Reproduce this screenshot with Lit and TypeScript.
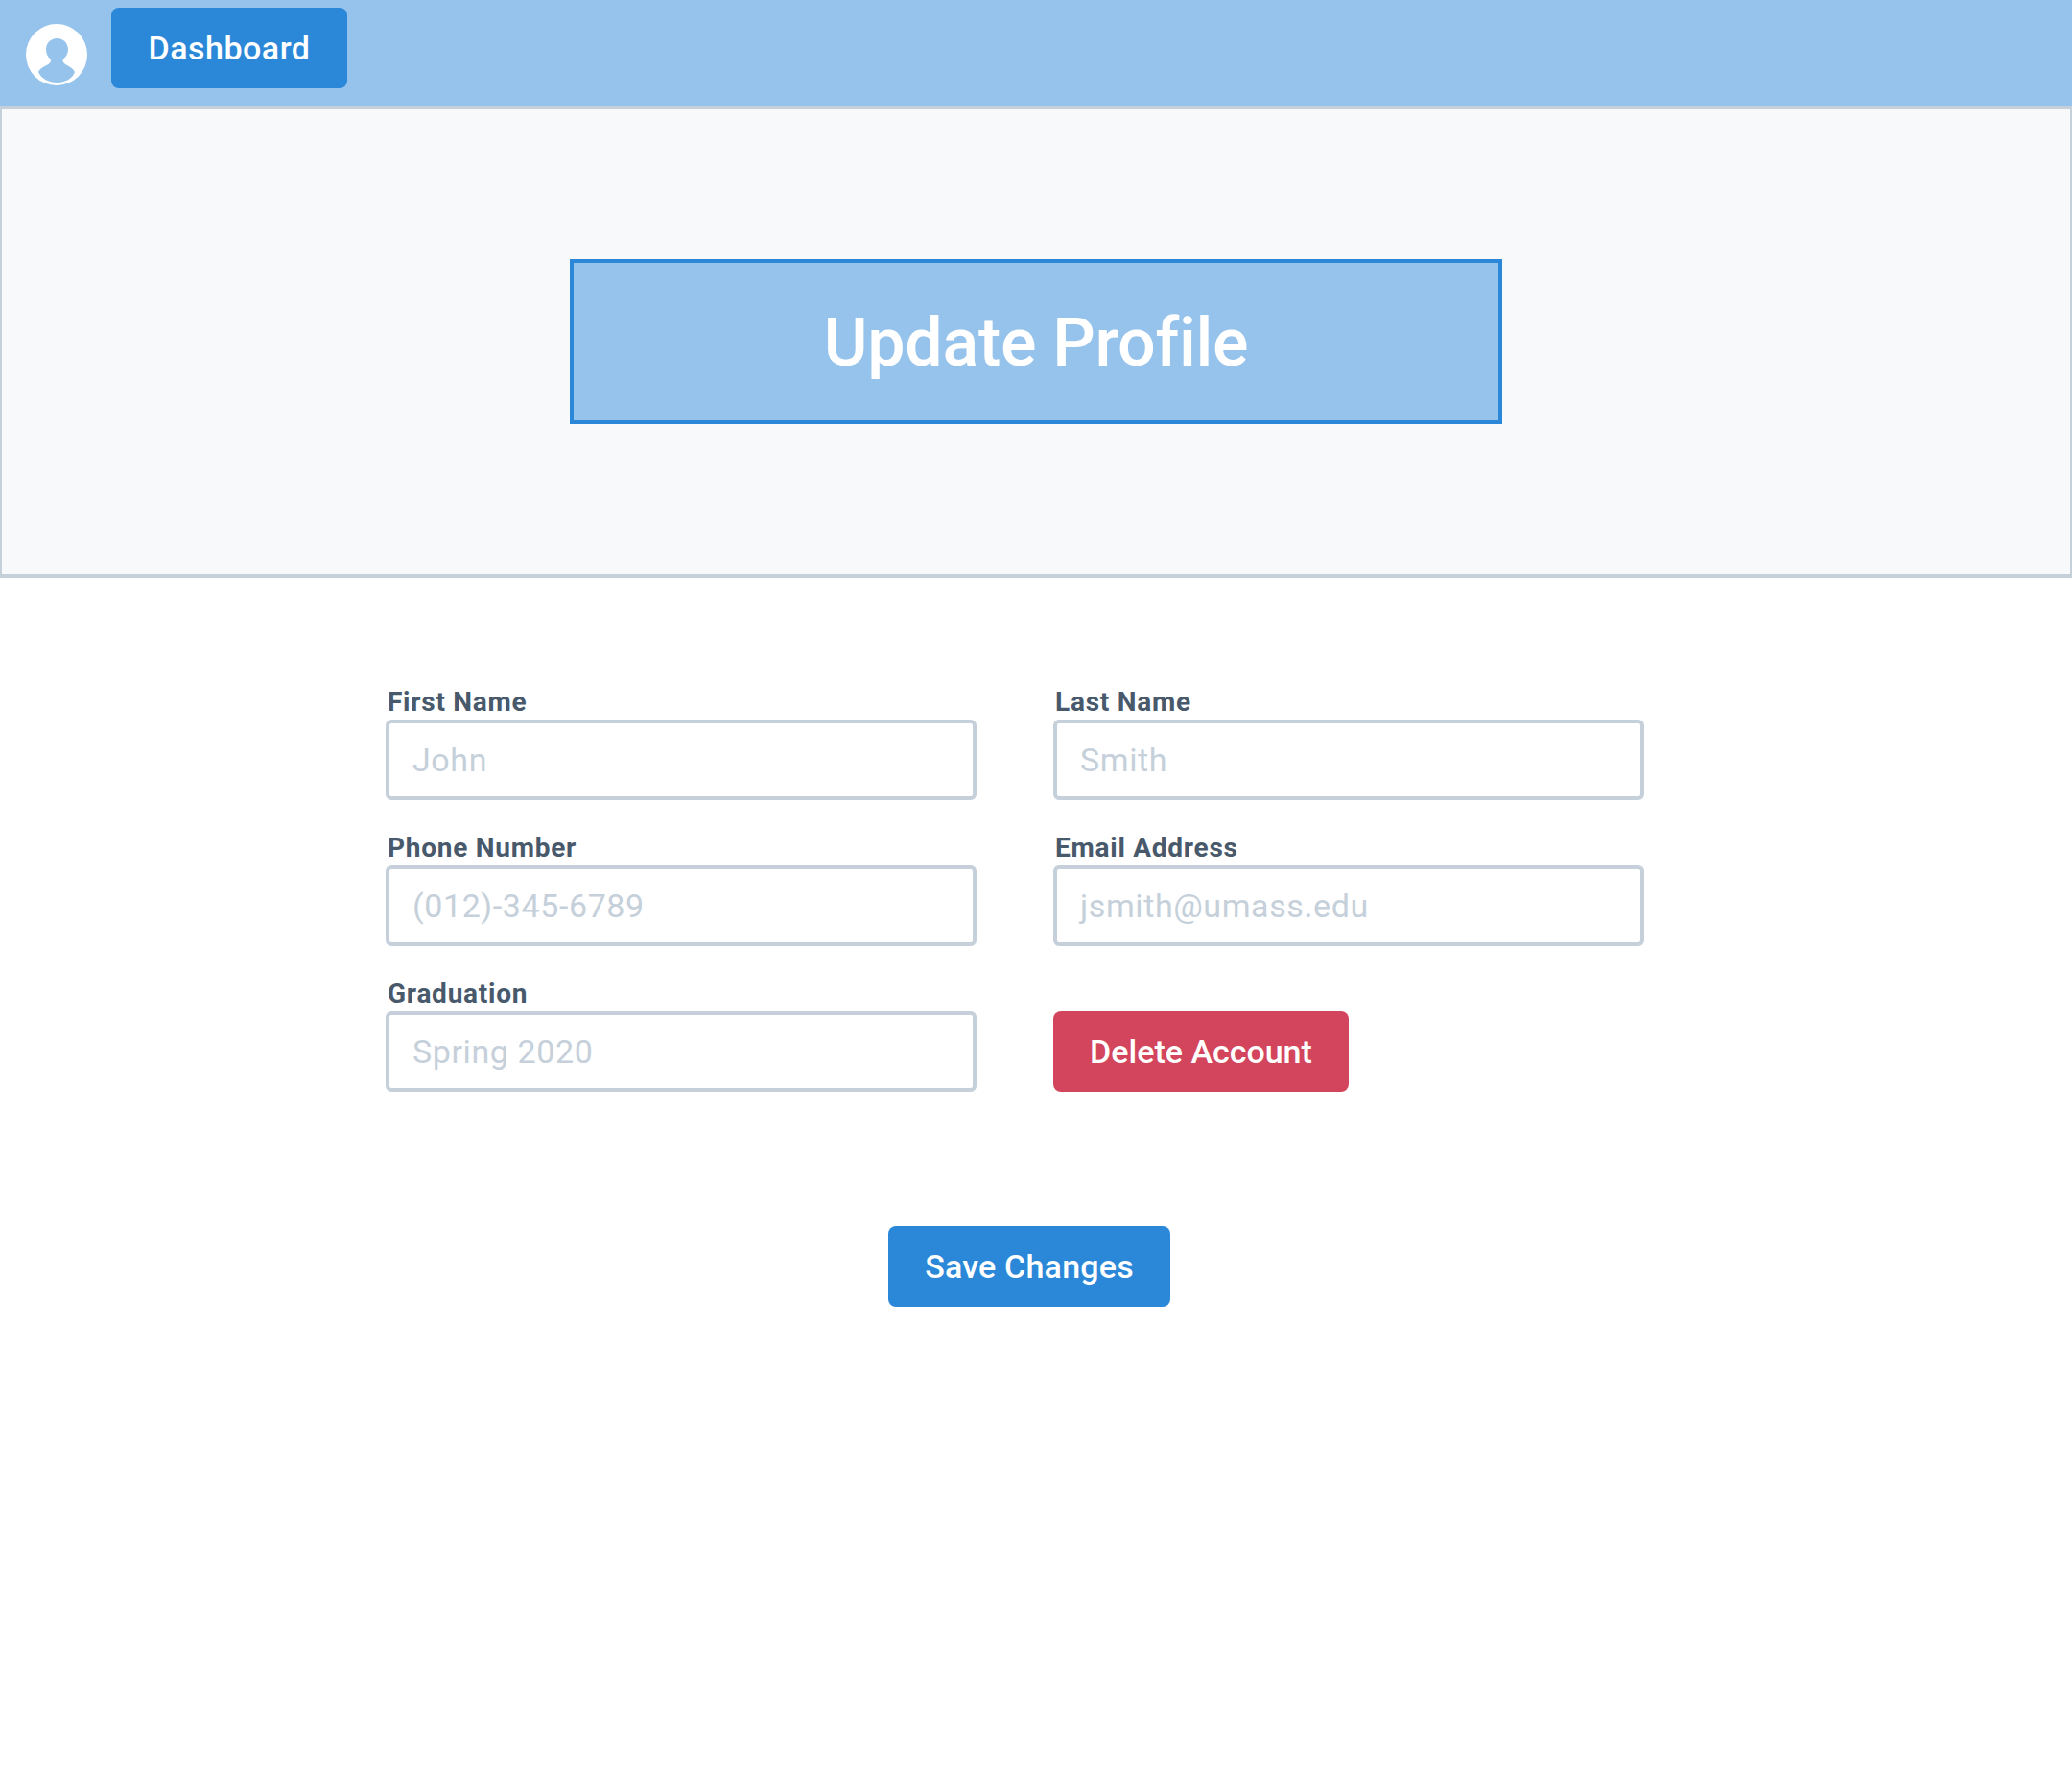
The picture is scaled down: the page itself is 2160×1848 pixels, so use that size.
import { LitElement, html, css } from "lit";
import { customElement } from "lit/decorators.js";

@customElement("app-root")
export class AppRoot extends LitElement {
	static styles = css`
		:host {
			display: block;
			min-height: 1848px;
			background: #fff;
			font-family: Roboto, "Liberation Sans", sans-serif;
		}

		.nav {
			display: flex;
			height: 110px;
			background: #96c3ec;
			box-sizing: border-box;
			padding: 8px 0 0 27px;
		}

		.avatar {
			width: 64px;
			height: 64px;
			margin: 17px 25px 0 0;
		}

		.btn {
			display: flex;
			align-items: center;
			justify-content: center;
			box-sizing: border-box;
			height: 84px;
			border-radius: 8px;
			color: #fff;
			font-size: 34px;
			font-weight: 500;
			letter-spacing: 0.2px;
			background: #2b88d9;
		}

		.dashboard {
			width: 246px;
			letter-spacing: 0.5px;
		}

		.hero {
			display: flex;
			justify-content: center;
			box-sizing: border-box;
			height: 492px;
			padding-top: 156px;
			background: #f8f9fb;
			border: solid #c5d0da;
			border-width: 4px 2px;
		}

		.title {
			display: flex;
			align-items: center;
			justify-content: center;
			box-sizing: border-box;
			width: 972px;
			height: 172px;
			padding-top: 2px;
			background: #96c3ec;
			border: 4px solid #2b88d9;
			color: #fff;
			font-size: 70px;
			font-weight: 500;
			letter-spacing: -0.3px;
		}

		.form {
			display: grid;
			grid-template-columns: 616px 616px;
			column-gap: 80px;
			row-gap: 30px;
			padding: 110px 0 0 402px;
		}

		.field {
			display: flex;
			flex-direction: column;
		}

		label {
			height: 38px;
			line-height: 40px;
			margin-left: 2px;
			color: #47596b;
			font-size: 28px;
			font-weight: 700;
			letter-spacing: 0.75px;
		}

		.input {
			display: flex;
			align-items: center;
			box-sizing: border-box;
			height: 84px;
			padding-left: 24px;
			border: 4px solid #c5d0da;
			border-radius: 6px;
			color: #c5d0da;
			font-size: 34px;
			letter-spacing: 0.6px;
		}

		.delete {
			align-self: end;
			width: 308px;
			background: #d2455c;
			letter-spacing: 0;
		}

		.save-row {
			padding: 140px 0 0 926px;
		}

		.save {
			width: 294px;
		}
	`;

	private renderField(label: string, placeholder: string) {
		return html`
			<div class="field">
				<label>${label}</label>
				<div class="input">${placeholder}</div>
			</div>
		`;
	}

	render() {
		return html`
			<div class="nav">
				<svg class="avatar" viewBox="0 0 64 64">
					<circle cx="32" cy="32" r="32" fill="#fff" />
					<path
						fill="#96c3ec"
						d="M32.500 15C26 15 21 20 21 26.500C21 31 23 34.500 25.500 36.500C26.500 38 26 39.500 24.500 41C22 43.500 15.500 44.500 13 50C16 57 24 61 32.500 61C41 61 48.500 57 51 50C48.500 44.500 42.500 43.500 40 41C38.500 39.500 38 38 39 36.500C41.500 34.500 44 31 44 26.500C44 20 39 15 32.500 15Z"
					/>
				</svg>
				<div class="btn dashboard">Dashboard</div>
			</div>
			<div class="hero">
				<div class="title">Update Profile</div>
			</div>
			<div class="form">
				${this.renderField("First Name", "John")}
				${this.renderField("Last Name", "Smith")}
				${this.renderField("Phone Number", "(012)-345-6789")}
				${this.renderField("Email Address", "jsmith@umass.edu")}
				${this.renderField("Graduation", "Spring 2020")}
				<div class="btn delete">Delete Account</div>
			</div>
			<div class="save-row">
				<div class="btn save">Save Changes</div>
			</div>
		`;
	}
}
